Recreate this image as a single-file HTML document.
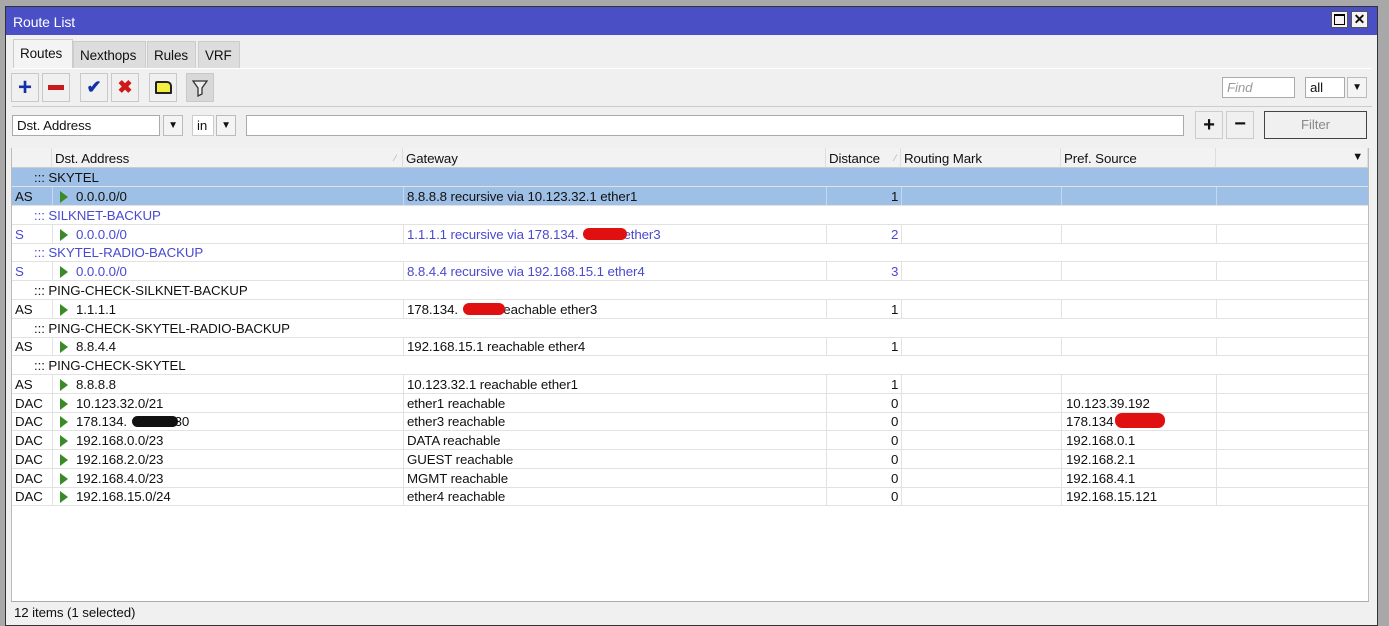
<!DOCTYPE html>
<html><head><meta charset="utf-8"><style>
*{box-sizing:border-box;margin:0;padding:0}
body{width:1389px;height:618px;overflow:hidden;background:#a8a8a8;font-family:"Liberation Sans",Arial,sans-serif;font-size:13.3px;color:#111;position:relative;letter-spacing:-0.1px}
.a{position:absolute}
#win{left:5px;top:6px;width:1373px;height:620px;background:#f0f0f0;border:1px solid #333}
#title{left:6px;top:7px;width:1371px;height:28px;background:#4b4fc6;color:#fff;font-size:14px;padding:7px 0 0 7px}
.tb{border:1px solid #555;background:#f4f4f4;width:17px;height:17px;top:11px}
.tab{top:41px;height:27px;background:#ddd;border:1px solid #ccc;border-bottom:none;padding:6px 0 0 6px;font-size:13.5px}
.btn{top:73px;width:28px;height:29px;border:1px solid #c8c8c8;background:#f0f0f0;display:flex;align-items:center;justify-content:center;font-weight:bold}
.inp{background:#fff;border:1px solid #aaa;height:21px;padding:2px 0 0 4px}
.dd{border:1px solid #bbb;background:#f4f4f4;width:20px;height:21px;font-size:10px;text-align:center;line-height:19px}
#tbl{left:11px;top:148px;width:1358px;height:454px;background:#fff;border:1px solid #bbb}
.hd{top:148px;height:20px;background:#f2f2f2;border-right:1px solid #ddd;border-bottom:1px solid #ccc;padding:3px 0 0 3px}
.r{left:12px;width:1356px;height:19px;border-bottom:1px solid #e2e2e2}
.c{position:absolute;top:2px;white-space:nowrap}
.v{position:absolute;top:0;height:18px;border-left:1px solid #e2e2e2}
.tri{position:absolute;top:4px;left:48px;width:0;height:0;border-left:8px solid #3a8a2a;border-top:6px solid transparent;border-bottom:6px solid transparent}
.blue{color:#4a4ad0}
.red{position:absolute;background:#e01010;border-radius:7px;height:12px}
</style></head><body>
<div id="win" class="a"></div>
<div id="title" class="a">Route List</div>
<div class="a tb" style="left:1331px"><div style="margin:2px;width:11px;height:11px;border:1px solid #000;border-top-width:2px"></div></div>
<div class="a tb" style="left:1351px;font-size:14px;font-weight:bold;text-align:center;line-height:15px">✕</div>

<div class="a tab" style="left:13px;width:60px;background:#f4f4f4;top:39px;height:30px">Routes</div>
<div class="a tab" style="left:73px;width:73px">Nexthops</div>
<div class="a tab" style="left:147px;width:49px">Rules</div>
<div class="a tab" style="left:198px;width:42px">VRF</div>
<div class="a" style="left:12px;top:68px;width:1360px;height:1px;background:#fff"></div>

<div class="a btn" style="left:11px;color:#1430a8;font-size:24px">+</div>
<div class="a btn" style="left:42px"><div style="width:16px;height:5px;background:#c81a1a"></div></div>
<div class="a btn" style="left:80px;color:#1430a8;font-size:18px">✔</div>
<div class="a btn" style="left:111px;color:#d01818;font-size:18px">✖</div>
<div class="a btn" style="left:149px"><div style="width:17px;height:13px;background:#f4ee40;border:2px solid #222;border-radius:2px 5px 1px 1px"></div></div>
<div class="a btn" style="left:186px;background:#d8d8d8"><svg width="16" height="18" viewBox="0 0 16 18"><path d="M1 2h14l-5 7v6l-4 2V9z" fill="#eee" stroke="#333" stroke-width="1.3"/></svg></div>
<div class="a" style="left:12px;top:106px;width:1360px;height:1px;background:#ccc"></div>

<div class="a inp" style="left:1222px;top:77px;width:73px;color:#999;font-style:italic">Find</div>
<div class="a inp" style="left:1305px;top:77px;width:40px">all</div>
<div class="a dd" style="left:1347px;top:77px">▼</div>

<div class="a inp" style="left:12px;top:115px;width:148px">Dst. Address</div>
<div class="a dd" style="left:163px;top:115px">▼</div>
<div class="a inp" style="left:192px;top:115px;width:22px;border-color:#ccc">in</div>
<div class="a dd" style="left:216px;top:115px">▼</div>
<div class="a inp" style="left:246px;top:115px;width:938px"></div>
<div class="a" style="left:1195px;top:111px;width:28px;height:28px;border:1px solid #ccc;text-align:center;font-size:20px;font-weight:bold;line-height:26px">+</div>
<div class="a" style="left:1226px;top:111px;width:28px;height:28px;border:1px solid #ccc;text-align:center;font-size:20px;font-weight:bold;line-height:24px">−</div>
<div class="a" style="left:1264px;top:111px;width:103px;height:28px;border:1px solid #444;text-align:center;line-height:26px;color:#888">Filter</div>

<div id="tbl" class="a"></div>
<div class="a hd" style="left:12px;width:40px"></div>
<div class="a hd" style="left:52px;width:351px">Dst. Address<span style="float:right;color:#aaa;font-size:9px;margin:2px 6px">⁄</span></div>
<div class="a hd" style="left:403px;width:423px">Gateway</div>
<div class="a hd" style="left:826px;width:75px">Distance<span style="float:right;color:#aaa;font-size:9px;margin:2px 4px">⁄</span></div>
<div class="a hd" style="left:901px;width:160px">Routing Mark</div>
<div class="a hd" style="left:1061px;width:155px">Pref. Source</div>
<div class="a hd" style="left:1216px;width:152px;text-align:right;padding-right:4px;font-size:11px">▼</div>

<div class="a r" style="top:168px;background:#9ec0e6"><span class="c" style="left:22px">::: SKYTEL</span></div>
<div class="a r" style="top:187px;background:#9ec0e6"><span class="c" style="left:3px">AS</span><div class="v" style="left:40px;border-color:#c4d8f0"></div><div class="tri"></div><span class="c" style="left:64px">0.0.0.0/0</span><div class="v" style="left:391px;border-color:#c4d8f0"></div><span class="c" style="left:395px">8.8.8.8 recursive via 10.123.32.1 ether1</span><div class="v" style="left:814px;border-color:#c4d8f0"></div><span class="c" style="left:879px">1</span><div class="v" style="left:889px;border-color:#c4d8f0"></div><div class="v" style="left:1049px;border-color:#c4d8f0"></div><div class="v" style="left:1204px;border-color:#c4d8f0"></div></div>
<div class="a r blue" style="top:206px"><span class="c" style="left:22px">::: SILKNET-BACKUP</span></div>
<div class="a r blue" style="top:224.5px"><span class="c" style="left:3px">S</span><div class="v" style="left:40px"></div><div class="tri"></div><span class="c" style="left:64px">0.0.0.0/0</span><div class="v" style="left:391px"></div><span class="c" style="left:395px">1.1.1.1 recursive via 178.134.<span style="display:inline-block;width:45px"></span>ether3</span><div class="red" style="left:571px;top:3px;width:44px"></div><div class="v" style="left:814px"></div><span class="c" style="left:879px">2</span><div class="v" style="left:889px"></div><div class="v" style="left:1049px"></div><div class="v" style="left:1204px"></div></div>
<div class="a r blue" style="top:243px"><span class="c" style="left:22px">::: SKYTEL-RADIO-BACKUP</span></div>
<div class="a r blue" style="top:262px"><span class="c" style="left:3px">S</span><div class="v" style="left:40px"></div><div class="tri"></div><span class="c" style="left:64px">0.0.0.0/0</span><div class="v" style="left:391px"></div><span class="c" style="left:395px">8.8.4.4 recursive via 192.168.15.1 ether4</span><div class="v" style="left:814px"></div><span class="c" style="left:879px">3</span><div class="v" style="left:889px"></div><div class="v" style="left:1049px"></div><div class="v" style="left:1204px"></div></div>
<div class="a r" style="top:281px"><span class="c" style="left:22px">::: PING-CHECK-SILKNET-BACKUP</span></div>
<div class="a r" style="top:300px"><span class="c" style="left:3px">AS</span><div class="v" style="left:40px"></div><div class="tri"></div><span class="c" style="left:64px">1.1.1.1</span><div class="v" style="left:391px"></div><span class="c" style="left:395px">178.134.<span style="display:inline-block;width:41px"></span>reachable ether3</span><div class="red" style="left:451px;top:3px;width:42px"></div><div class="v" style="left:814px"></div><span class="c" style="left:879px">1</span><div class="v" style="left:889px"></div><div class="v" style="left:1049px"></div><div class="v" style="left:1204px"></div></div>
<div class="a r" style="top:318.5px"><span class="c" style="left:22px">::: PING-CHECK-SKYTEL-RADIO-BACKUP</span></div>
<div class="a r" style="top:337px"><span class="c" style="left:3px">AS</span><div class="v" style="left:40px"></div><div class="tri"></div><span class="c" style="left:64px">8.8.4.4</span><div class="v" style="left:391px"></div><span class="c" style="left:395px">192.168.15.1 reachable ether4</span><div class="v" style="left:814px"></div><span class="c" style="left:879px">1</span><div class="v" style="left:889px"></div><div class="v" style="left:1049px"></div><div class="v" style="left:1204px"></div></div>
<div class="a r" style="top:356px"><span class="c" style="left:22px">::: PING-CHECK-SKYTEL</span></div>
<div class="a r" style="top:375px"><span class="c" style="left:3px">AS</span><div class="v" style="left:40px"></div><div class="tri"></div><span class="c" style="left:64px">8.8.8.8</span><div class="v" style="left:391px"></div><span class="c" style="left:395px">10.123.32.1 reachable ether1</span><div class="v" style="left:814px"></div><span class="c" style="left:879px">1</span><div class="v" style="left:889px"></div><div class="v" style="left:1049px"></div><div class="v" style="left:1204px"></div></div>
<div class="a r" style="top:393.5px"><span class="c" style="left:3px">DAC</span><div class="v" style="left:40px"></div><div class="tri"></div><span class="c" style="left:64px">10.123.32.0/21</span><div class="v" style="left:391px"></div><span class="c" style="left:395px">ether1 reachable</span><div class="v" style="left:814px"></div><span class="c" style="left:879px">0</span><div class="v" style="left:889px"></div><div class="v" style="left:1049px"></div><span class="c" style="left:1054px">10.123.39.192</span><div class="v" style="left:1204px"></div></div>
<div class="a r" style="top:412px"><span class="c" style="left:3px">DAC</span><div class="v" style="left:40px"></div><div class="tri"></div><span class="c" style="left:64px">178.134.<span style="display:inline-block;width:44px"></span>/30</span><div style="position:absolute;left:120px;top:4px;width:46px;height:11px;background:#111;border-radius:6px"></div><div class="v" style="left:391px"></div><span class="c" style="left:395px">ether3 reachable</span><div class="v" style="left:814px"></div><span class="c" style="left:879px">0</span><div class="v" style="left:889px"></div><div class="v" style="left:1049px"></div><span class="c" style="left:1054px">178.134</span><div class="red" style="left:1103px;top:1px;width:50px;height:15px"></div><div class="v" style="left:1204px"></div></div>
<div class="a r" style="top:431px"><span class="c" style="left:3px">DAC</span><div class="v" style="left:40px"></div><div class="tri"></div><span class="c" style="left:64px">192.168.0.0/23</span><div class="v" style="left:391px"></div><span class="c" style="left:395px">DATA reachable</span><div class="v" style="left:814px"></div><span class="c" style="left:879px">0</span><div class="v" style="left:889px"></div><div class="v" style="left:1049px"></div><span class="c" style="left:1054px">192.168.0.1</span><div class="v" style="left:1204px"></div></div>
<div class="a r" style="top:450px"><span class="c" style="left:3px">DAC</span><div class="v" style="left:40px"></div><div class="tri"></div><span class="c" style="left:64px">192.168.2.0/23</span><div class="v" style="left:391px"></div><span class="c" style="left:395px">GUEST reachable</span><div class="v" style="left:814px"></div><span class="c" style="left:879px">0</span><div class="v" style="left:889px"></div><div class="v" style="left:1049px"></div><span class="c" style="left:1054px">192.168.2.1</span><div class="v" style="left:1204px"></div></div>
<div class="a r" style="top:468.5px"><span class="c" style="left:3px">DAC</span><div class="v" style="left:40px"></div><div class="tri"></div><span class="c" style="left:64px">192.168.4.0/23</span><div class="v" style="left:391px"></div><span class="c" style="left:395px">MGMT reachable</span><div class="v" style="left:814px"></div><span class="c" style="left:879px">0</span><div class="v" style="left:889px"></div><div class="v" style="left:1049px"></div><span class="c" style="left:1054px">192.168.4.1</span><div class="v" style="left:1204px"></div></div>
<div class="a r" style="top:487px"><span class="c" style="left:3px">DAC</span><div class="v" style="left:40px"></div><div class="tri"></div><span class="c" style="left:64px">192.168.15.0/24</span><div class="v" style="left:391px"></div><span class="c" style="left:395px">ether4 reachable</span><div class="v" style="left:814px"></div><span class="c" style="left:879px">0</span><div class="v" style="left:889px"></div><div class="v" style="left:1049px"></div><span class="c" style="left:1054px">192.168.15.121</span><div class="v" style="left:1204px"></div></div>

<div class="a" style="left:11px;top:601px;width:1358px;height:1px;background:#aaa"></div>
<div class="a" style="left:14px;top:605px">12 items (1 selected)</div>
</body></html>
